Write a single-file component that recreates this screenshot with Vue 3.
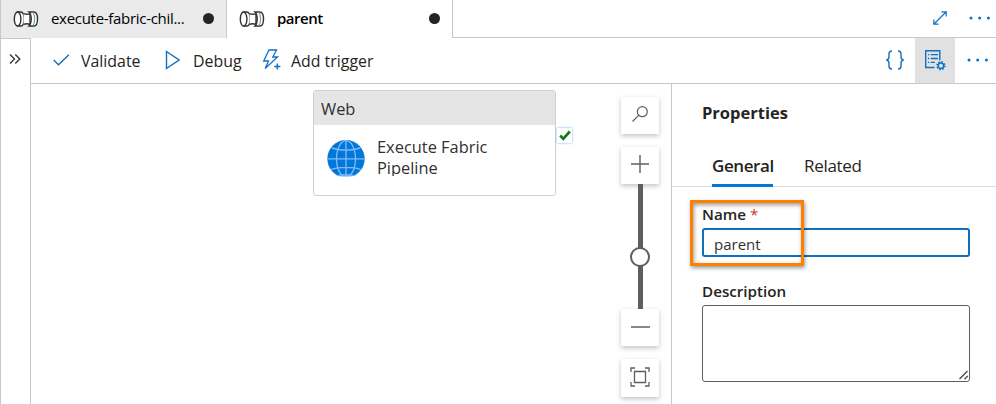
<template>
  <div class="studio">
    <header class="tabs">
      <div
        v-for="tab in tabs"
        :key="tab.id"
        class="tab"
        :class="{ active: tab.id === activeTab }"
        @click="activeTab = tab.id"
      >
        <svg class="pipeline-icon" width="26" height="18" viewBox="0 0 26 18" fill="#fff" stroke="#323130" stroke-width="1.400">
          <path d="M4.500 2H8c1.900 0 3 3.200 3 7s-1.100 7-3 7H4.500z" />
          <ellipse cx="4.600" cy="9" rx="3.300" ry="7" />
          <path d="M10.500 3.600c2 .8 4.500.8 6.500 0v10.800c-2-.8-4.500-.8-6.500 0" />
          <path d="M16 2h4.800c2.400 0 3.700 3.200 3.700 7s-1.300 7-3.700 7H16c1.600-1.500 2.200-4 2.200-7s-.6-5.500-2.200-7z" />
          <path d="M19.800 2.200c1.200 1.500 1.800 4 1.800 6.800s-.6 5.300-1.800 6.800" fill="none" stroke="#7699b0" stroke-width="1.100" />
        </svg>
        <span class="tab-name">{{ tab.name }}</span>
        <span class="dirty"></span>
      </div>
      <div class="tabs-rest">
        <svg width="16" height="16" viewBox="0 0 16 16" fill="none" stroke="#1070c4" stroke-width="1.200">
          <path d="M2 14 14 2M9.500 1.800h4.700v4.700M1.800 9.500v4.700h4.700" />
        </svg>
        <svg class="more" width="22" height="4" viewBox="0 0 22 4" fill="#1070c4">
          <circle cx="2" cy="2" r="1.500" /><circle cx="10.700" cy="2" r="1.500" /><circle cx="19.400" cy="2" r="1.500" />
        </svg>
      </div>
    </header>

    <div class="body">
      <aside class="rail">
        <svg width="12" height="12" viewBox="0 0 12 12" fill="none" stroke="#323130" stroke-width="1.300">
          <path d="M1 1.500 5.500 6 1 10.500M6.300 1.500 10.800 6l-4.500 4.500" />
        </svg>
      </aside>

      <main class="main">
        <div class="toolbar">
          <button class="action validate">
            <svg width="17" height="12" viewBox="0 0 17 12" fill="none" stroke="#1070c4" stroke-width="1.400">
              <path d="M.7 6 5.500 10.700 15.900.7" />
            </svg>
            <span>Validate</span>
          </button>
          <button class="action debug">
            <svg width="16" height="20" viewBox="0 0 16 20" fill="none" stroke="#1070c4" stroke-width="1.400">
              <path d="M2.500 1.500v17L15 10z" />
            </svg>
            <span>Debug</span>
          </button>
          <button class="action trigger">
            <svg width="20" height="21" viewBox="0 0 20 21" fill="none" stroke="#1070c4" stroke-width="1.300">
              <path d="M7 1h7.500L10.800 8h4.700L3.200 19.500 6.500 12H1.700z" />
              <path d="M12 17.500h6.500M15.200 14.300v6.500" stroke="#fff" stroke-width="4" />
              <path d="M12.200 17.500h6.200M15.300 14.400v6.200" stroke-width="1.500" />
            </svg>
            <span>Add trigger</span>
          </button>
          <div class="tools">
            <button class="tool">
              <svg width="20" height="20" viewBox="0 0 20 20" fill="none" stroke="#1070c4" stroke-width="1.400">
                <path d="M7 1C4.500 1 4 2 4 3.800v3C4 8.700 3.200 9.800 1.300 10 3.200 10.200 4 11.300 4 13.200v3C4 18 4.500 19 7 19M13 1c2.500 0 3 1 3 2.800v3c0 1.900.8 3 2.700 3.200-1.900.2-2.700 1.300-2.700 3.200v3c0 1.800-.5 2.800-3 2.800" />
              </svg>
            </button>
            <button class="tool selected">
              <svg width="22" height="22" viewBox="0 0 22 22" fill="none" stroke="#1070c4" stroke-width="1.400">
                <path d="M10.500 18.500H1.700V1.700h14.100v9.500M4 5.600h1.300M6.800 5.600H14M4 9.500h1.300M6.800 9.500H14M4 13.400h1.300M6.800 13.400H11" />
                <circle cx="16.900" cy="16.700" r="2.700" />
                <circle cx="16.900" cy="16.700" r="3.900" stroke-width="1.500" stroke-dasharray="1.530" />
              </svg>
            </button>
            <button class="tool last">
              <svg width="22" height="4" viewBox="0 0 22 4" fill="#1070c4">
                <circle cx="2" cy="2" r="1.500" /><circle cx="10.700" cy="2" r="1.500" /><circle cx="19.400" cy="2" r="1.500" />
              </svg>
            </button>
          </div>
        </div>

        <div class="workspace">
          <section class="canvas">
            <div class="node">
              <div class="node-type">Web</div>
              <div class="node-body">
                <svg width="38" height="37" viewBox="0 0 38 37">
                  <clipPath id="globe"><path d="M0 0h38v36.200H0z" /></clipPath>
                  <g clip-path="url(#globe)">
                    <circle cx="19" cy="18.800" r="18.700" fill="#0078d7" />
                    <g fill="none" stroke="#83b9f9" stroke-width="1.300">
                      <path d="M19 0v37M.3 18.800h37.400M4.500 7.600C12 11 26 11 33.500 7.600M3.800 29.600C12 26.500 26 26.500 34.200 29.600" />
                      <ellipse cx="19" cy="18.800" rx="9.500" ry="18.200" />
                    </g>
                    <path d="M7.500 36.200C13 32.800 25 32.800 30.500 36.200z" fill="#83b9f9" opacity=".75" />
                  </g>
                </svg>
                <div class="node-name">Execute Fabric<br />Pipeline</div>
              </div>
              <span class="success">
                <svg width="12" height="11" viewBox="0 0 12 11" fill="none" stroke="#107c10" stroke-width="2.700">
                  <path d="M1.200 5.500 4.300 8.800 10.800 1.500" />
                </svg>
              </span>
            </div>

            <div class="zoom">
              <button class="zoom-button search">
                <svg width="18" height="18" viewBox="0 0 18 18" fill="none" stroke="#605e5c" stroke-width="1.200">
                  <circle cx="11.300" cy="6.700" r="5" /><path d="M7.800 10.200 1.500 16.500" />
                </svg>
              </button>
              <button class="zoom-button">
                <svg width="18" height="18" viewBox="0 0 18 18" stroke="#605e5c" stroke-width="1.400">
                  <path d="M0 9h18M9 0v18" />
                </svg>
              </button>
              <div class="track"><span class="knob"></span></div>
              <button class="zoom-button minus">
                <svg width="19" height="18" viewBox="0 0 19 18" stroke="#484644" stroke-width="1.300">
                  <path d="M0 9h19" />
                </svg>
              </button>
              <button class="zoom-button fit">
                <svg width="20" height="20" viewBox="0 0 20 20" fill="none" stroke="#605e5c" stroke-width="1.300">
                  <path d="M4.500 4.500h11v11h-11zM1 5V1h4M15 1h4v4M19 15v4h-4M5 19H1v-4" />
                </svg>
              </button>
            </div>
          </section>

          <section class="properties">
            <h2>Properties</h2>
            <nav class="pivot">
              <span class="pivot-item current">General</span>
              <span class="pivot-item related">Related</span>
            </nav>
            <div class="form">
              <label class="name-label" for="name">Name <span class="required">*</span></label>
              <input id="name" v-model="name" type="text" />
              <label class="description-label" for="description">Description</label>
              <div class="area">
                <textarea id="description" v-model="description"></textarea>
                <svg class="grip" width="10" height="10" viewBox="0 0 10 10" stroke="#484644" stroke-width="1.300">
                  <path d="M.5 9 8.500 1M5.500 9.200l3.300-3.300" />
                </svg>
              </div>
              <div class="highlight"></div>
            </div>
          </section>
        </div>
      </main>
    </div>
  </div>
</template>

<script setup>
import { ref } from 'vue'

const tabs = [
  { id: 1, name: 'execute-fabric-chil...' },
  { id: 2, name: 'parent' },
]

const activeTab = ref(2)
const name = ref('parent')
const description = ref('')
</script>

<style>
body {
  margin: 0;
  overflow: hidden;
}
</style>

<style scoped>
* {
  box-sizing: border-box;
}

.studio {
  width: 996px;
  height: 404px;
  display: flex;
  flex-direction: column;
  overflow: hidden;
  background: #fff;
  color: #252423;
  font-family: "Open Sans", "Noto Sans", sans-serif;
  font-size: 15px;
}

svg {
  display: block;
  flex: none;
}

button {
  display: flex;
  align-items: center;
  padding: 0;
  border: none;
  background: none;
  color: inherit;
  font: inherit;
  white-space: nowrap;
}

.tabs {
  display: flex;
  height: 38px;
  flex: none;
  border-left: 1px solid #c8c8c8;
}

.tab {
  display: flex;
  align-items: center;
  width: 226px;
  padding: 0 12px 1px 12px;
  border-right: 1px solid #c8c8c8;
  background: #eaeaea;
  color: #000;
}

.tab.active {
  background: #fff;
  font-weight: 600;
}

.tab-name {
  margin-left: 12px;
  padding-bottom: 1px;
  font-size: 15px;
  letter-spacing: -0.3px;
  white-space: nowrap;
}

.tab.active .tab-name {
  letter-spacing: -0.5px;
}

.dirty {
  width: 11px;
  height: 11px;
  margin-left: auto;
  border-radius: 50%;
  background: #252423;
}

.tabs-rest {
  display: flex;
  flex: 1;
  align-items: center;
  justify-content: flex-end;
  padding: 0 5px 2px 0;
  border-bottom: 1px solid #c8c8c8;
}

.more {
  margin-left: 21px;
}

.body {
  display: flex;
  flex: 1;
  min-height: 0;
}

.rail {
  width: 31px;
  flex: none;
  padding: 14px 0 0 8px;
  border: 1px solid #c8c8c8;
  border-width: 1px 1px 0;
}

.main {
  display: flex;
  flex: 1;
  flex-direction: column;
  min-width: 0;
}

.toolbar {
  display: flex;
  height: 46px;
  flex: none;
  border-bottom: 1px solid #c8c8c8;
}

.action {
  padding-bottom: 2px;
  font-size: 15.9px;
}

.validate {
  width: 133px;
  padding-left: 22px;
}

.debug {
  width: 98px;
}

.action span {
  margin-left: 11px;
  padding-top: 2px;
}

.debug span {
  margin-left: 13px;
}

.trigger span {
  margin-left: 9px;
}

.tools {
  display: flex;
  margin-left: auto;
}

.tool {
  justify-content: center;
  width: 40px;
  padding-bottom: 2px;
}

.tool.selected {
  background: #e1e1e1;
}

.last {
  width: 41px;
  padding: 0 0 1px 4px;
}

.workspace {
  display: flex;
  flex: 1;
  min-height: 0;
}

.canvas {
  position: relative;
  flex: 1;
}

.node {
  position: absolute;
  top: 6px;
  left: 282px;
  width: 243px;
  height: 106px;
  border: 1px solid #d0d0d0;
  border-radius: 3px;
  background: #fff;
  color: #323130;
}

.node-type {
  height: 34px;
  padding-left: 7px;
  background: #e5e5e5;
  font-size: 16.4px;
  line-height: 35px;
}

.node-body {
  display: flex;
  padding: 15px 0 0 13px;
}

.node-name {
  height: 40px;
  margin: -4px 0 0 12px;
  overflow: hidden;
  font-size: 16.4px;
  line-height: 21px;
}

.success {
  position: absolute;
  top: 37px;
  left: 243px;
  display: flex;
  align-items: center;
  justify-content: center;
  width: 15px;
  height: 15px;
  background: #fff;
  box-shadow: 0 0 2px #64aff0;
}

.zoom {
  position: absolute;
  top: 13px;
  left: 590px;
  display: flex;
  flex-direction: column;
  align-items: center;
}

.zoom-button {
  justify-content: center;
  width: 38px;
  height: 37px;
  padding-bottom: 3px;
  background: #fff;
  box-shadow: 0 2px 5px rgba(0, 0, 0, 0.24);
}

.search {
  margin-bottom: 13px;
}

.minus {
  padding-bottom: 1px;
}

.fit {
  height: 38px;
  margin-top: 13px;
}

.track {
  position: relative;
  width: 5px;
  height: 125px;
  background: #605e5c;
}

.knob {
  position: absolute;
  top: 63px;
  left: -8px;
  width: 20px;
  height: 20px;
  border: 2px solid #605e5c;
  border-radius: 50%;
  background: #fff;
}

.properties {
  display: flex;
  flex-direction: column;
  width: 325px;
  flex: none;
  border-left: 1px solid #c8c8c8;
}

h2 {
  height: 61px;
  margin: 0;
  padding: 18px 0 0 30px;
  font-size: 16.500px;
  font-weight: 700;
  line-height: 22px;
}

.pivot {
  display: flex;
  height: 42px;
  padding-left: 40px;
  border-bottom: 1px solid #dcdcdc;
  font-size: 17px;
  letter-spacing: -0.4px;
  line-height: 41px;
}

.pivot-item {
  height: 42px;
  white-space: nowrap;
}

.related {
  letter-spacing: -0.3px;
}

.current {
  width: 61px;
  margin-right: 31px;
  border-bottom: 3px solid #0078d7;
  font-weight: 600;
}

.form {
  position: relative;
  display: flex;
  flex-direction: column;
  padding: 17px 26px 0 30px;
}

label {
  height: 24px;
  font-size: 15.2px;
  font-weight: 600;
  line-height: 20px;
}

.required {
  color: #d13438;
  font-weight: 400;
}

input {
  height: 29px;
  padding: 3px 10px 0;
  border: 2px solid #106ebe;
  border-radius: 3px;
  outline: none;
  color: #323130;
  font: inherit;
}

.description-label {
  margin-top: 24px;
}

.area {
  position: relative;
  height: 77px;
}

textarea {
  display: block;
  width: 100%;
  height: 100%;
  border: 1px solid #605e5c;
  border-radius: 3px;
  outline: none;
  resize: none;
  font: inherit;
}

.grip {
  position: absolute;
  right: 1px;
  bottom: 2px;
}

.highlight {
  position: absolute;
  top: 13px;
  left: 18px;
  width: 114px;
  height: 66px;
  border: 3px solid #ff8000;
  box-shadow: 1px 2px 4px rgba(0, 0, 0, 0.4), inset 1px 2px 4px rgba(0, 0, 0, 0.4);
  pointer-events: none;
}
</style>
